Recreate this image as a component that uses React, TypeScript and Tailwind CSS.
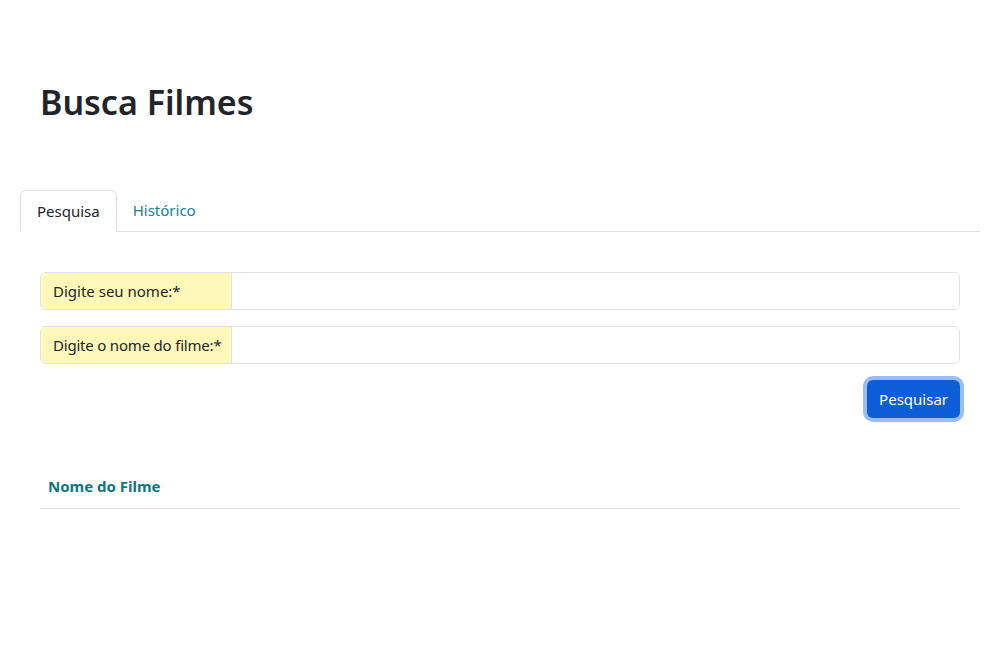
export default function App() {
  return (
    <div className="min-h-[660px] bg-white px-5 text-[#212529]" style={{ fontFamily: '"Noto Sans", "Open Sans", sans-serif' }}>
      <div className="px-5 pt-[81px] pb-[67px]">
        <h1 className="text-[34px] font-semibold leading-[1.235]">Busca Filmes</h1>
      </div>
      <div className="flex border-b border-[#dee2e6] text-[15px]">
        <div className="-mb-px flex h-[42px] items-center rounded-t-[6px] border border-[#dee2e6] border-b-white bg-white px-4 text-[#212529]">Pesquisa</div>
        <div className="flex h-[41px] items-center px-4 text-[#128497]">Histórico</div>
      </div>
      <div className="px-5 pt-10">
        <div className="flex h-[38px] overflow-hidden rounded-[6px] border border-[#dee2e6] text-[15px]">
          <div className="flex w-[191px] shrink-0 items-center whitespace-nowrap border-r border-[#dee2e6] bg-[#fff8b9] pl-3">Digite seu nome:*</div>
          <input className="min-w-0 flex-1 bg-white px-3 outline-none" />
        </div>
        <div className="mt-4 flex h-[38px] overflow-hidden rounded-[6px] border border-[#dee2e6] text-[15px]">
          <div className="flex w-[191px] shrink-0 items-center whitespace-nowrap border-r border-[#dee2e6] bg-[#fff8b9] pl-3 tracking-[-0.2px]">Digite o nome do filme:*</div>
          <input className="min-w-0 flex-1 bg-white px-3 outline-none" />
        </div>
        <div className="mt-4 flex justify-end">
          <button className="h-[38px] rounded-[6px] bg-[#0b5ed7] px-3 text-[15px] text-white ring-4 ring-[#98bdf9]">Pesquisar</button>
        </div>
        <div className="mt-[56px] border-b border-[#dee2e6] px-2 pb-[10px]">
          <span className="text-[15px] font-bold text-[#0e7682]">Nome do Filme</span>
        </div>
      </div>
    </div>
  );
}
